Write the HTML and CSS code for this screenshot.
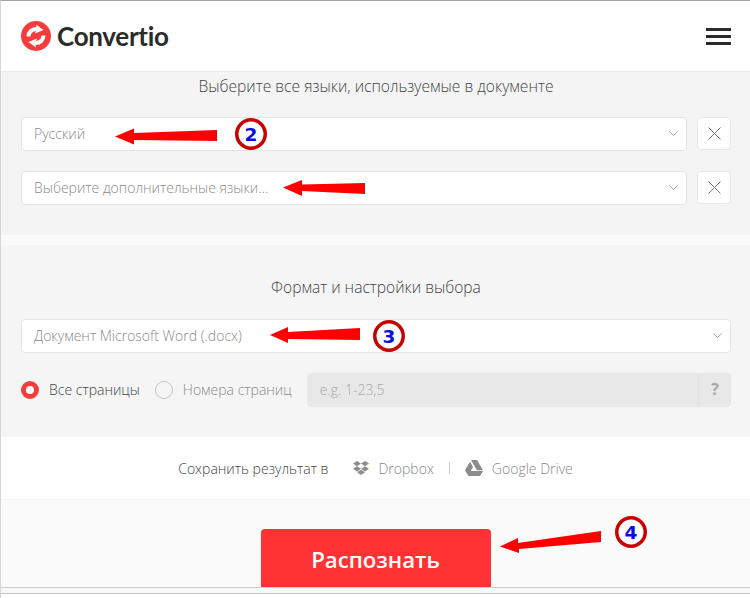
FILE: index.html
```html
<!DOCTYPE html>
<html lang="ru">
<head>
<meta charset="utf-8">
<title>Convertio</title>
<link rel="stylesheet" href="styles.css">
</head>
<body>
<div class="page">
  <header class="topbar">
    <div class="brand">
      <svg class="brand-icon" viewBox="0 0 30 30" width="30" height="30">
        <circle cx="15" cy="15" r="15" fill="#f63c3c"/>
        <path d="M5.500 15.500 A9.500 9.500 0 0 1 15.500 6 L15 3.500 L22.500 9 L14 12.500 L14.800 10 A5.500 5.500 0 0 0 9.500 15.500 Z" fill="#fff"/>
        <path d="M24.500 14.500 A9.500 9.500 0 0 1 14.500 24 L15 26.500 L7.500 21 L16 17.500 L15.200 20 A5.500 5.500 0 0 0 20.500 14.500 Z" fill="#fff"/>
      </svg>
      <span class="brand-name">Convertio</span>
    </div>
    <div class="burger"><i></i><i></i><i></i></div>
  </header>

  <section class="panel panel-lang">
    <h2 class="panel-title title-lang">Выберите все языки, используемые в документе</h2>
    <div class="lang-row">
      <div class="select"><span>Русский</span><svg class="chev" viewBox="0 0 9 5" width="9" height="5"><path d="M.3.300 4.500 4.500 8.700.300" fill="none" stroke="#aaa"/></svg></div>
      <button class="clear"><svg viewBox="0 0 13 13" width="13" height="13"><path d="M.5.5l12 12M12.500.5l-12 12" stroke="#777" fill="none"/></svg></button>
    </div>
    <div class="lang-row">
      <div class="select"><span>Выберите дополнительные языки...</span><svg class="chev" viewBox="0 0 9 5" width="9" height="5"><path d="M.3.300 4.500 4.500 8.700.300" fill="none" stroke="#aaa"/></svg></div>
      <button class="clear"><svg viewBox="0 0 13 13" width="13" height="13"><path d="M.5.5l12 12M12.500.5l-12 12" stroke="#777" fill="none"/></svg></button>
    </div>
  </section>
  <div class="strip"></div>
  <section class="panel panel-format">
    <h2 class="panel-title title-format">Формат и настройки выбора</h2>
    <div class="select"><span>Документ Microsoft Word (.docx)</span><svg class="chev" viewBox="0 0 9 5" width="9" height="5"><path d="M.3.300 4.500 4.500 8.700.300" fill="none" stroke="#aaa"/></svg></div>
    <div class="pages-row">
      <span class="radio radio-on"></span><span class="radio-label">Все страницы</span>
      <span class="radio radio-off"></span><span class="radio-label label-off">Номера страниц</span>
      <div class="range"><span class="range-hint">e.g. 1-23,5</span><span class="range-help">?</span></div>
    </div>
  </section>

  <section class="save">
    <span class="save-label">Сохранить результат в</span>
    <svg class="cloud-dropbox" viewBox="0 0 16 15" width="16" height="15"><path d="M4 0 0 2.600l4 2.600 4-2.600zM12 0 8 2.600l4 2.600 4-2.600zM0 7.800l4 2.600 4-2.600-4-2.600zM12 5.200 8 7.800l4 2.600 4-2.600zM4 11.300 8 14l4-2.700-4-2.600z" fill="#8c8c8c"/></svg>
    <span class="cloud-name">Dropbox</span>
    <span class="sep"></span>
    <svg class="cloud-drive" viewBox="0 0 18 16" width="18" height="16"><path d="M6 0h6l6 10.300h-6zM5 1.700 8 7l-5 8.600-3-5.300zM5.500 11h12.500l-3 5H3z" fill="#8c8c8c"/></svg>
    <span class="cloud-name">Google Drive</span>
  </section>

  <section class="action">
    <button class="submit">Распознать</button>
  </section>
  <div class="page-end"></div>

  <svg class="notes" viewBox="0 0 750 598" width="750" height="598">
    <g fill="#f00">
      <polygon points="115,136.500 134,128.500 134,133 217,130 217,141 134,140 134,144.500"/>
      <polygon points="283,187.500 302,180 302,184.500 365,183 365,194 302,191 302,196"/>
      <polygon points="270,335 288,327 288,332 360,328 360,340 288,339 288,343"/>
      <polygon points="500,546.500 518,538 518,543 601,531 601,542 519,549 519,553"/>
    </g>
    <g fill="#fff" stroke="#c80000" stroke-width="3.500">
      <circle cx="251" cy="134" r="14.250"/>
      <circle cx="389" cy="336" r="14.250"/>
      <circle cx="631" cy="532" r="14.250"/>
    </g>
    <g class="note-num" text-anchor="middle">
      <text x="251" y="141">2</text>
      <text x="389" y="343">3</text>
      <text x="631" y="539">4</text>
    </g>
  </svg>
</div>
</body>
</html>
```
FILE: styles.css
```css
* { box-sizing: border-box; }
html, body { margin: 0; padding: 0; }
body {
  width: 750px;
  height: 598px;
  overflow: hidden;
  background: #fff;
  font-family: "Open Sans", "Liberation Sans", sans-serif;
}
.page {
  position: relative;
  width: 750px;
  height: 598px;
  overflow: hidden;
  border-top: 1px solid #a3a3a3;
  border-left: 1px solid #d6d6d6;
  display: flex;
  flex-direction: column;
}
.topbar {
  flex: none;
  height: 70px;
  display: flex;
  align-items: center;
  justify-content: space-between;
  padding: 0 19px 0 20px;
  background: #fff;
}
.brand { display: flex; align-items: center; gap: 6px; }
.brand-icon { display: block; }
.brand-name {
  font-family: Lato, "Open Sans", sans-serif;
  font-weight: 700;
  font-size: 26px;
  line-height: 30px;
  letter-spacing: -0.3px;
  color: #2b2b2b;
}
.burger { display: flex; flex-direction: column; gap: 4px; width: 25px; }
.burger i { display: block; height: 3px; background: #2b2b2b; }

.panel { flex: none; background: #f4f4f4; padding: 0 19px 0 20px; }
.panel-lang { height: 164px; border-top: 1px solid #ebebeb; padding-top: 4px; }
.panel-format { height: 192px; background: #f5f5f5; padding-top: 32px; }
.strip { flex: none; height: 10px; background: #fafafa; }
.panel-title {
  margin: 0;
  font-size: 15.600px;
  font-weight: 300;
  line-height: 20px;
  text-align: center;
  color: #444;
}
.title-lang { margin-bottom: 21px; }
.title-format { margin-bottom: 22px; }
.lang-row { display: flex; gap: 10px; align-items: flex-start; margin-bottom: 20px; }
.select {
  flex: 1;
  height: 34px;
  display: flex;
  align-items: center;
  justify-content: space-between;
  padding: 0 8px 2px 12px;
  background: #fff;
  border: 1px solid #e4e4e4;
  border-radius: 4px;
  font-size: 14px;
  font-weight: 300;
  color: #8a8a8a;
}
.chev { display: block; }
.clear {
  flex: none;
  width: 34px;
  height: 33px;
  padding: 0;
  display: flex;
  align-items: center;
  justify-content: center;
  background: #fff;
  border: 1px solid #e8e8e8;
  border-radius: 4px;
}
.pages-row { display: flex; align-items: center; height: 34px; margin-top: 20px; }
.radio { flex: none; width: 18px; height: 18px; border-radius: 50%; }
.radio-on { border: 5px solid #f63c3c; background: #fff; }
.radio-off { border: 1px solid #c4c4c4; margin-left: 15px; }
.radio-label { margin: -2px 0 0 10px; font-size: 14px; font-weight: 300; color: #444; white-space: nowrap; }
.label-off { color: #8a8a8a; }
.range {
  flex: 1;
  height: 34px;
  margin-left: 15px;
  display: flex;
  align-items: center;
  justify-content: space-between;
  background: #e8e8e8;
  border-radius: 4px;
  font-size: 14px;
  font-weight: 300;
  color: #a5a5a5;
}
.range-hint { padding: 0 0 2px 13px; }
.range-help {
  width: 33px;
  height: 34px;
  line-height: 33px;
  text-align: center;
  border-left: 1px solid #e2e2e2;
  font-size: 16px;
  font-weight: 700;
  color: #a8a8a8;
}

.save {
  flex: none;
  height: 62px;
  display: flex;
  align-items: center;
  justify-content: center;
  background: #fff;
  font-size: 14px;
  font-weight: 300;
}
.save-label { color: #444; margin-right: 25px; }
.cloud-name { color: #888; margin-left: 9px; }
.sep { width: 1px; height: 12px; background: #ccc; margin: 0 15px; }

.action {
  flex: none;
  height: 88px;
  background: #fafafa;
  border-top: 1px solid #f5f5f5;
  padding-top: 29px;
  display: flex;
  justify-content: center;
  overflow: hidden;
}
.submit {
  flex: none;
  width: 230px;
  height: 70px;
  padding: 0 0 9px;
  background: #ff3333;
  border: 0;
  border-radius: 4px 4px 0 0;
  font-family: "Open Sans", sans-serif;
  font-size: 22.200px;
  font-weight: 600;
  color: #fff;
}
.page-end {
  flex: none;
  height: 7px;
  background: #f8f8f8;
  border-top: 1px solid #cfcfcf;
  border-bottom: 1px solid #c4c4c4;
}

.notes { position: absolute; left: -1px; top: -1px; pointer-events: none; }
.note-num {
  font-family: "DejaVu Sans", sans-serif;
  font-weight: 700;
  font-size: 18.500px;
  fill: #0a0ae6;
}
```
